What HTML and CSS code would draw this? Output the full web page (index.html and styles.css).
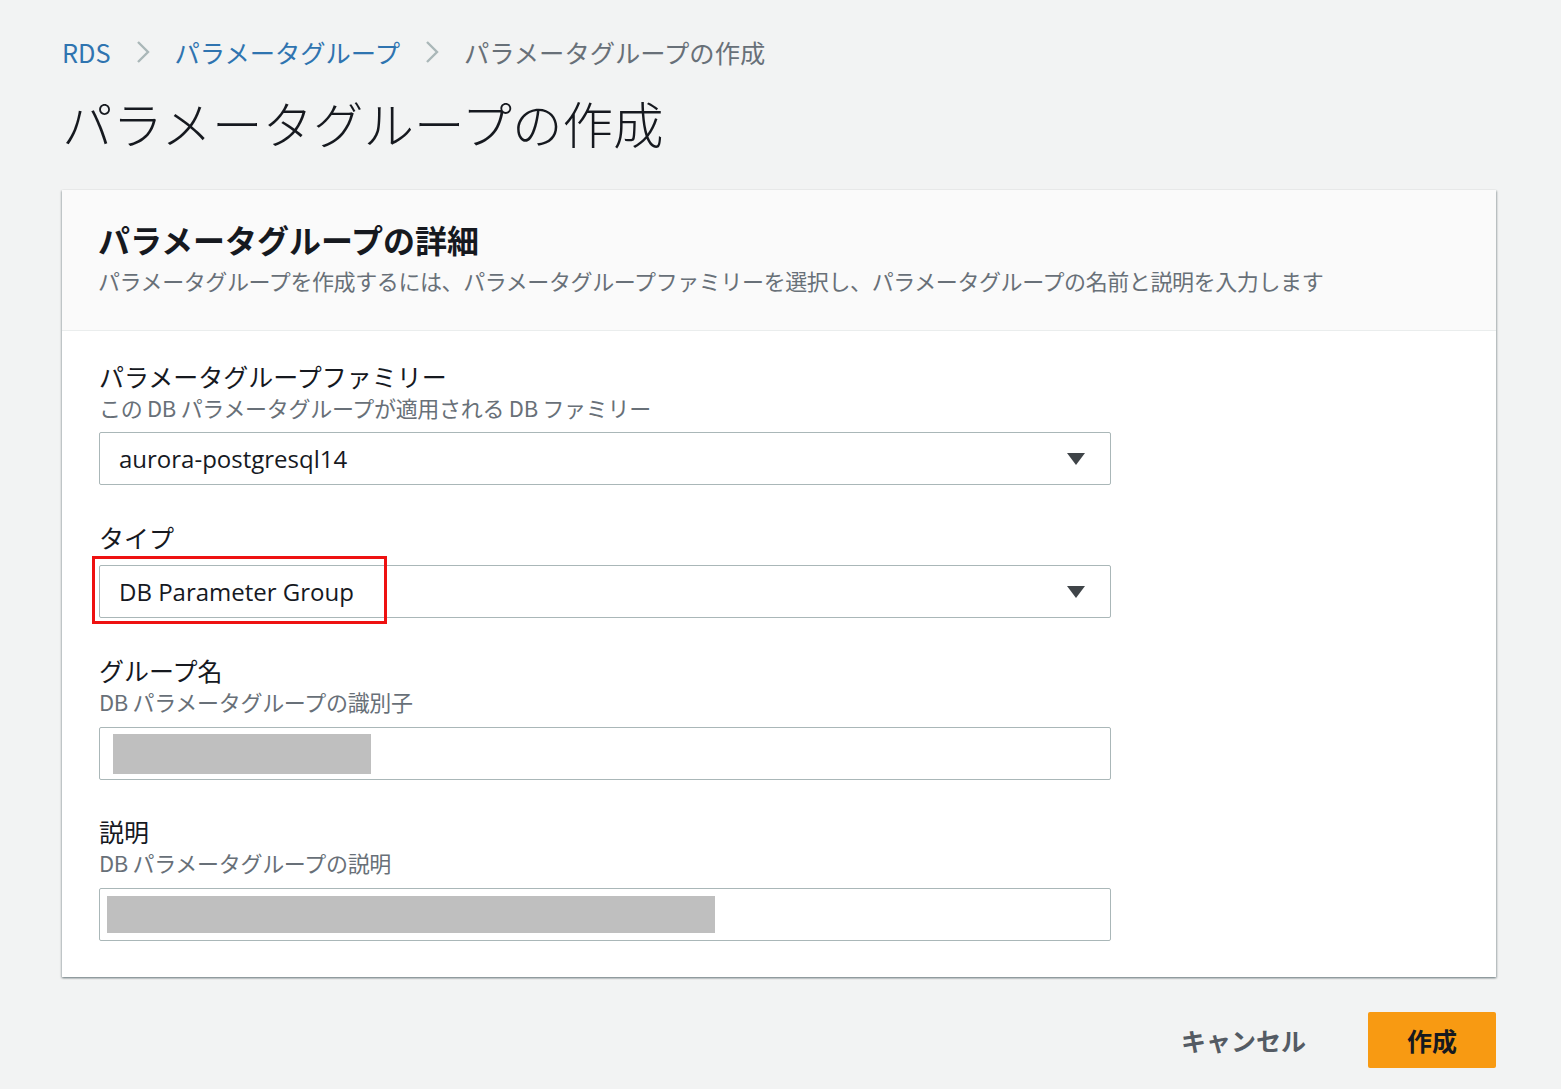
FILE: index.html
```html
<!DOCTYPE html>
<html lang="ja">
<head>
<meta charset="utf-8">
<title>パラメータグループの作成</title>
<link rel="stylesheet" href="styles.css">
</head>
<body>
<div class="page">
  <nav class="breadcrumb">
    <a class="crumb-link" href="#">RDS</a>
    <svg class="chev" width="16" height="26" viewBox="0 0 16 26"><path d="M3 3 L13 13 L3 23" fill="none" stroke="#aab7b8" stroke-width="2.4"/></svg>
    <a class="crumb-link" href="#">パラメータグループ</a>
    <svg class="chev" width="16" height="26" viewBox="0 0 16 26"><path d="M3 3 L13 13 L3 23" fill="none" stroke="#aab7b8" stroke-width="2.4"/></svg>
    <span class="crumb-current">パラメータグループの作成</span>
  </nav>
  <h1 class="page-title">パラメータグループの作成</h1>

  <section class="card">
    <header class="card-header">
      <h2 class="card-title">パラメータグループの詳細</h2>
      <p class="card-desc">パラメータグループを作成するには、パラメータグループファミリーを選択し、パラメータグループの名前と説明を入力します</p>
    </header>
    <div class="card-body">
      <div class="field">
        <div class="label">パラメータグループファミリー</div>
        <div class="sub">この DB パラメータグループが適用される DB ファミリー</div>
        <div class="select">
          <span class="select-text">aurora-postgresql14</span>
          <svg class="caret" width="20" height="14" viewBox="0 0 20 14"><path d="M1 1 H19 L10 13 Z" fill="#3f4448"/></svg>
        </div>
      </div>
      <div class="field">
        <div class="label">タイプ</div>
        <div class="select select-tight">
          <span class="select-text">DB Parameter Group</span>
          <svg class="caret" width="20" height="14" viewBox="0 0 20 14"><path d="M1 1 H19 L10 13 Z" fill="#3f4448"/></svg>
          <span class="highlight"></span>
        </div>
      </div>
      <div class="field">
        <div class="label">グループ名</div>
        <div class="sub">DB パラメータグループの識別子</div>
        <div class="input">
          <span class="mask mask-name"></span>
        </div>
      </div>
      <div class="field">
        <div class="label">説明</div>
        <div class="sub">DB パラメータグループの説明</div>
        <div class="input input-desc">
          <span class="mask mask-desc"></span>
        </div>
      </div>
    </div>
  </section>

  <div class="actions">
    <button class="btn-cancel" type="button">キャンセル</button>
    <button class="btn-primary" type="button">作成</button>
  </div>
</div>
</body>
</html>
```

FILE: styles.css
```css
html, body {
  margin: 0;
  padding: 0;
  background: #f2f3f3;
}
body {
  font-family: "Noto Sans CJK JP", "Noto Sans", sans-serif;
  color: #16191f;
}
.page {
  padding: 37px 65px 0 62px;
  width: 1434px;
}
.breadcrumb {
  display: flex;
  align-items: center;
  height: 30px;
  font-size: 25.3px;
  line-height: 30px;
}
.crumb-link {
  color: #2f74b0;
  text-decoration: none;
}
.chev {
  margin: 0 24px 0 24px;
}
.crumb-current {
  color: #687078;
}
.page-title {
  margin: 25px 0 0 0;
  font-size: 50.5px;
  line-height: 60px;
  font-weight: 300;
}
.card {
  margin-top: 38px;
  background: #ffffff;
  box-shadow: 0 1px 2px rgba(0,28,36,0.35), 1px 1px 2px rgba(0,28,36,0.2), -1px 1px 2px rgba(0,28,36,0.15);
}
.card-header {
  background: #fafafa;
  border-bottom: 1px solid #eaeded;
  padding: 29px 36px 35px 36px;
  height: 76px;
}
.card-title {
  margin: 0;
  font-size: 32px;
  line-height: 40px;
  font-weight: 700;
}
.card-desc {
  margin: 6px 0 0 0;
  font-size: 22px;
  line-height: 30px;
  color: #687078;
  letter-spacing: -0.4px;
}
.card-body {
  padding: 29px 36px 36px 37px;
}
.field + .field {
  margin-top: 36px;
}
.label {
  font-size: 25px;
  line-height: 32px;
}
.sub {
  font-size: 22px;
  line-height: 30px;
  color: #687078;
  letter-spacing: -0.3px;
}
.select, .input {
  position: relative;
  box-sizing: border-box;
  width: 1012px;
  height: 53px;
  margin-top: 10px;
  border: 1px solid #aab7b8;
  border-radius: 2px;
  background: #fff;
  display: flex;
  align-items: center;
}
.select-tight {
  margin-top: 12px;
}
.select-text {
  padding-left: 19px;
  font-family: "Open Sans", "Noto Sans", sans-serif;
  font-size: 24px;
  color: #16191f;
  flex: 1;
}
.caret {
  margin-right: 24px;
}
.highlight {
  position: absolute;
  left: -8px;
  top: -10px;
  width: 295px;
  height: 68px;
  box-sizing: border-box;
  border: 3px solid #ee1111;
}
.input {
  margin-top: 11px;
}
.field:last-child {
  margin-top: 35px;
}
.mask {
  display: block;
  background: #bfbfbf;
}
.mask-name {
  margin-left: 13px;
  width: 258px;
  height: 40px;
}
.mask-desc {
  margin-left: 7px;
  width: 608px;
  height: 37px;
}
.actions {
  display: flex;
  justify-content: flex-end;
  align-items: center;
  margin-top: 35px;
}
.btn-cancel {
  border: none;
  background: transparent;
  font-family: "Noto Sans CJK JP", sans-serif;
  font-size: 25px;
  font-weight: 700;
  color: #545b64;
  padding: 0;
  margin-right: 62px;
}
.btn-primary {
  width: 128px;
  height: 56px;
  border: none;
  border-radius: 2px;
  background: #f89a12;
  font-family: "Noto Sans CJK JP", sans-serif;
  font-size: 25px;
  font-weight: 700;
  color: #16191f;
}
```
